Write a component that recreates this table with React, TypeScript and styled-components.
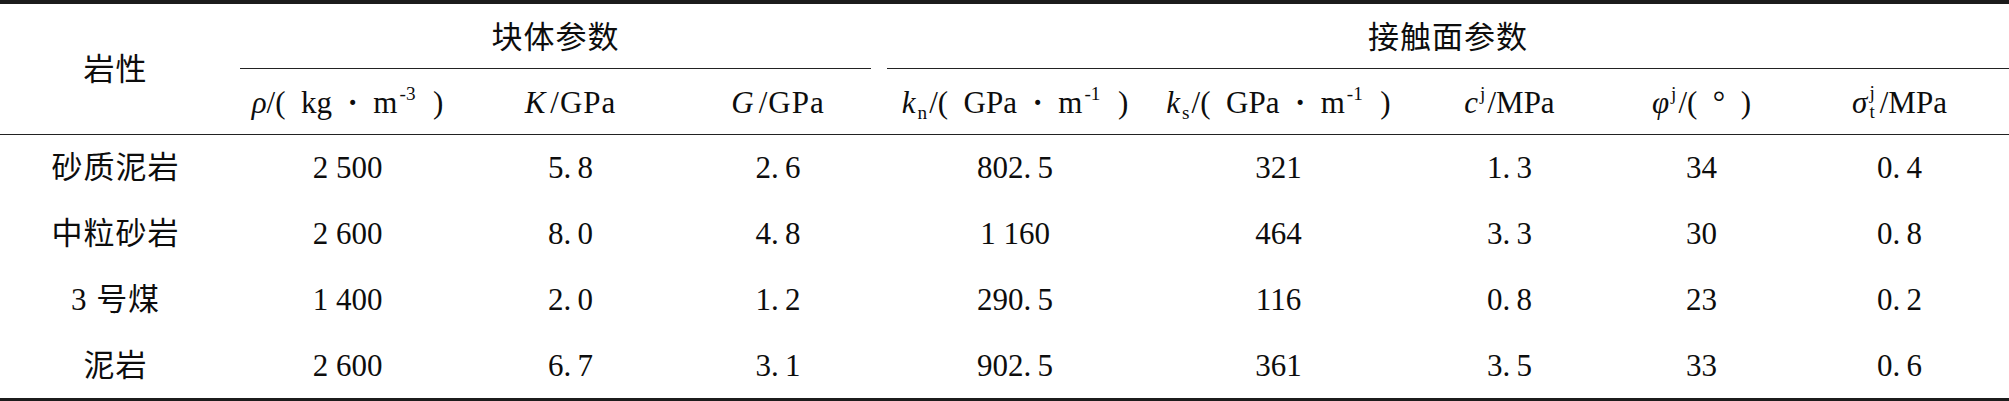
import styled, { createGlobalStyle } from 'styled-components';

const GlobalStyle = createGlobalStyle`
  html, body {
    margin: 0;
    padding: 0;
    background: #ffffff;
  }
  body {
    font-family: 'Liberation Serif', 'Noto Sans CJK SC', serif;
    color: #0d0d0d;
  }
`;

const COLUMNS = '231px 233px 213px 202px 272px 255px 207px 177px 219px';

const rows: { name: string; values: string[] }[] = [
  { name: '砂质泥岩', values: ['2 500', '5.\u20098', '2.\u20096', '802.\u20095', '321', '1.\u20093', '34', '0.\u20094'] },
  { name: '中粒砂岩', values: ['2 600', '8.\u20090', '4.\u20098', '1 160', '464', '3.\u20093', '30', '0.\u20098'] },
  { name: '3 号煤', values: ['1 400', '2.\u20090', '1.\u20092', '290.\u20095', '116', '0.\u20098', '23', '0.\u20092'] },
  { name: '泥岩', values: ['2 600', '6.\u20097', '3.\u20091', '902.\u20095', '361', '3.\u20095', '33', '0.\u20096'] },
];

const App = () => {
  return (
    <>
      <GlobalStyle />
      <Table>
        <Head>
          <NameHead>岩性</NameHead>
          <GroupHead $from={2} $span={3} $left={9} $right={8}>
            块体参数
          </GroupHead>
          <GroupHead $from={5} $span={5} $left={8} $right={0}>
            接触面参数
          </GroupHead>
          <ParamHead>
            <Var>ρ</Var>/(&ensp;kg&ensp;<Dot>·</Dot>&ensp;m<Sup>-3</Sup>&ensp;)
          </ParamHead>
          <ParamHead $spaced>
            <Var $gap={4}>K</Var>/GPa
          </ParamHead>
          <ParamHead $spaced>
            <Var $gap={4}>G</Var>/GPa
          </ParamHead>
          <ParamHead>
            <Var>k</Var>
            <Sub>n</Sub>/(&ensp;GPa&ensp;<Dot>·</Dot>&ensp;m<Sup>-1</Sup>&ensp;)
          </ParamHead>
          <ParamHead>
            <Var>k</Var>
            <Sub>s</Sub>/(&ensp;GPa&ensp;<Dot>·</Dot>&ensp;m<Sup>-1</Sup>&ensp;)
          </ParamHead>
          <ParamHead>
            <Var>c</Var>
            <Sup>j</Sup>/MPa
          </ParamHead>
          <ParamHead>
            <Var>φ</Var>
            <Sup>j</Sup>/(&ensp;°&ensp;)
          </ParamHead>
          <ParamHead>
            <Var>σ</Var>
            <Stack>
              <span>j</span>
              <span>t</span>
            </Stack>
            /MPa
          </ParamHead>
        </Head>
        <Body>
          {rows.map((row) => (
            <Row key={row.name}>
              <NameCell>{row.name}</NameCell>
              {row.values.map((value, i) => (
                <Cell key={i}>{value}</Cell>
              ))}
            </Row>
          ))}
        </Body>
      </Table>
    </>
  );
};

const Table = styled.div`
  width: 2009px;
  border-top: 4px solid #1c1c1c;
  border-bottom: 3px solid #1c1c1c;
  font-size: 31px;
  line-height: 1;
`;

const Head = styled.div`
  display: grid;
  grid-template-columns: ${COLUMNS};
  grid-template-rows: 65px 65px;
  border-bottom: 1px solid #222222;
`;

const Centered = styled.div`
  display: flex;
  align-items: center;
  justify-content: center;
  white-space: pre;
`;

const NameHead = styled(Centered)`
  grid-column: 1;
  grid-row: 1 / span 2;
  letter-spacing: 1px;
`;

const GroupHead = styled(Centered)<{ $from: number; $span: number; $left: number; $right: number }>`
  grid-row: 1;
  grid-column: ${(p) => p.$from} / span ${(p) => p.$span};
  margin: 0 ${(p) => p.$right}px 0 ${(p) => p.$left}px;
  border-bottom: 1px solid #222222;
  padding-top: 2px;
  letter-spacing: 1px;
`;

const ParamHead = styled(Centered)<{ $spaced?: boolean }>`
  grid-row: 2;
  padding-top: 2px;
  letter-spacing: ${(p) => (p.$spaced ? '1px' : '0')};
`;

const Var = styled.i<{ $gap?: number }>`
  font-style: italic;
  margin-right: ${(p) => p.$gap ?? 0}px;
`;

const Dot = styled.span`
  font-weight: bold;
`;

const Sup = styled.span`
  font-size: 0.62em;
  align-self: flex-start;
  margin-top: 13px;
  padding: 0 2px;
`;

const Sub = styled.span`
  font-size: 0.62em;
  align-self: flex-end;
  margin-bottom: 12px;
  padding: 0 2px;
`;

const Stack = styled.span`
  display: inline-flex;
  flex-direction: column;
  font-size: 0.62em;
  line-height: 0.95;
  padding: 0 5px 0 2px;
`;

const Body = styled.div`
  display: grid;
  grid-template-rows: repeat(4, 65.75px);
`;

const Row = styled.div`
  display: grid;
  grid-template-columns: ${COLUMNS};
`;

const Cell = styled(Centered)``;

const NameCell = styled(Centered)`
  letter-spacing: 1px;
`;

export default App;
